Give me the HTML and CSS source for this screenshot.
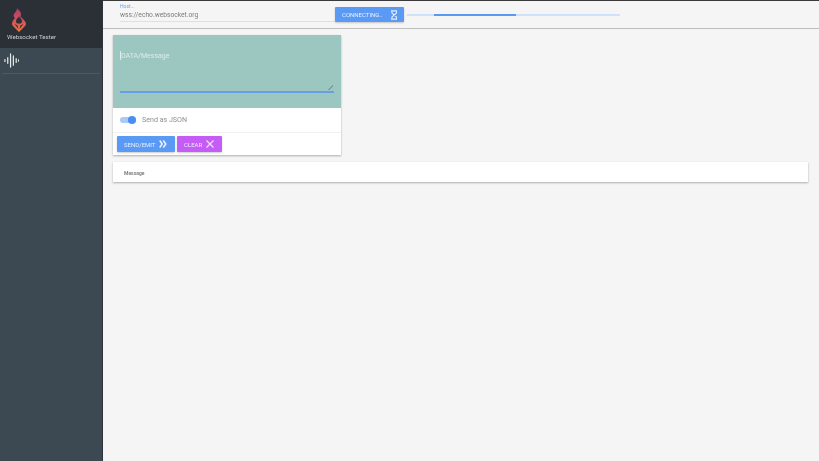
FILE: index.html
```html
<!DOCTYPE html>
<html lang="en">
<head>
    <meta charset="UTF-8">
    <meta name="viewport" content="width=device-width, initial-scale=1.0">
    <title>Websocket Tester</title>
    <link rel="stylesheet" href="styles.css">
</head>
<body>
    <div class="app">
        <aside class="sidebar">
            <div class="brand">
                <svg class="logo" width="14" height="24" viewBox="0 0 14 24">
                    <defs>
                        <linearGradient id="flame" x1="0" y1="0" x2="0" y2="1">
                            <stop offset="0" stop-color="#a83d68"/>
                            <stop offset="0.55" stop-color="#d9525a"/>
                            <stop offset="1" stop-color="#e67a3c"/>
                        </linearGradient>
                    </defs>
                    <path fill="url(#flame)" d="M5 0c1 2 4 3 4 6 0 1 0 2-1 2l2 2c2 2 4 4 4 6 0 1-1 2-2 3l-5 5-5-5c-1-1-2-2-2-3 0-2 1-4 3-6-1-1-2-2-1-4 1-2 3-3 3-6z"/>
                    <path fill="#2a3036" d="M7 8.500c1.500 1.500 3 3 3 4.500 0 1-.5 2-1.200 2.500H5.200C4.500 15 4 14 4 13c0-1.500 1.500-3 3-4.500zM2.500 16l3 1.500 1 3.500zM11.500 16l-3 1.500-1 3.500z"/>
                </svg>
                <div class="brand-name">Websocket Tester</div>
            </div>
            <div class="nav-item">
                <svg width="15" height="15" viewBox="0 0 16 16" stroke="#e6e9ea" stroke-width="1.3" stroke-linecap="round">
                    <path d="M1 7v2M4 5v6M7 1v14M10 3v10M13 6v4M15.500 7.400v1.200"/>
                </svg>
            </div>
            <div class="nav-line"></div>
        </aside>

        <div class="main">
            <header class="toolbar">
                <div class="host-field">
                    <label class="host-label">Host...</label>
                    <div class="host-value">wss://echo.websocket.org</div>
                </div>
                <button class="btn btn-blue connect-btn">
                    CONNECTING..
                    <svg width="7" height="10" viewBox="0 0 7 10" fill="none" stroke="#e4eefd" stroke-width="1.100">
                        <path d="M0 .5h7M0 9.500h7M1 .5v2.300L6 7.200v2.300M6 .5v2.300L1 7.200v2.300"/>
                    </svg>
                </button>
                <div class="progress"><div class="progress-bar"></div></div>
            </header>

            <div class="content">
                <section class="card">
                    <div class="message-area">
                        <textarea class="message-input" placeholder="DATA/Message"></textarea>
                    </div>
                    <div class="json-row">
                        <span class="switch"><span class="switch-thumb"></span></span>
                        <span>Send as JSON</span>
                    </div>
                    <div class="actions">
                        <button class="btn btn-blue send-btn">
                            SEND/EMIT
                            <svg width="8" height="8" viewBox="0 0 8 8" fill="none" stroke="#eef4fe" stroke-width="1.500">
                                <path d="M.7.500l2.500 3.500-2.500 3.500M4.300.500l2.500 3.500-2.500 3.500"/>
                            </svg>
                        </button>
                        <button class="btn btn-purple">
                            CLEAR
                            <svg width="8" height="8" viewBox="0 0 8 8" fill="none" stroke="#f6e6fe" stroke-width="1.100">
                                <path d="M.5.500l7 7M7.500.500l-7 7"/>
                            </svg>
                        </button>
                    </div>
                </section>

                <section class="message-list">Message</section>
            </div>
        </div>
    </div>
</body>
</html>
```

FILE: styles.css
```css
html, body {
    margin: 0;
    height: 100%;
}
body {
    font-family: Roboto, "Liberation Sans", sans-serif;
    background-color: #f5f5f5;
    overflow: hidden;
}
.app {
    display: flex;
    height: 461px;
    will-change: transform;
}
.sidebar {
    width: 102px;
    flex-shrink: 0;
    background-color: #3c4952;
    border-right: 1px solid #2c3339;
}
.brand {
    height: 48px;
    background-color: #2a3036;
    display: flex;
    flex-direction: column;
    align-items: flex-start;
    box-sizing: border-box;
    padding: 8px 0 0 7px;
}
.logo {
    margin-left: 5px;
}
.brand-name {
    color: #c9cccf;
    font-size: 6.200px;
    line-height: 8px;
    margin-top: 1px;
}
.nav-item {
    height: 25px;
    padding-left: 4px;
    display: flex;
    align-items: center;
}
.nav-line {
    height: 1px;
    margin: 0 2px;
    background-color: #8a3d4b;
}
.main {
    flex: 1;
    min-width: 0;
}
.toolbar {
    height: 29px;
    box-sizing: border-box;
    border-top: 1px solid #3a3a3a;
    border-bottom: 1px solid #bdbdbd;
    display: flex;
    align-items: flex-start;
    padding-left: 17px;
}
.host-field {
    width: 215px;
    height: 20px;
    border-bottom: 1px solid #e0e0e0;
    flex-shrink: 0;
}
.host-label {
    display: block;
    color: #6ea6f7;
    font-size: 5px;
    line-height: 5px;
    margin-top: 3px;
}
.host-value {
    color: #7d7d7d;
    font-size: 6.700px;
    line-height: 10px;
    margin-top: 1px;
}
.btn {
    border: none;
    border-radius: 1px;
    color: #e8f0fd;
    font-family: inherit;
    font-size: 6px;
    height: 16px;
    padding: 0 7px;
    display: inline-flex;
    align-items: center;
    gap: 4px;
    box-shadow: 0 1px 2px rgba(0,0,0,0.2);
}
.btn-blue {
    background-color: #5a9af5;
}
.btn-purple {
    background-color: #c45cf5;
    width: 45px;
}
.send-btn {
    width: 58px;
}
.connect-btn {
    width: 69px;
    height: 15px;
    margin: 6px 0 0 0;
    gap: 8px;
    flex-shrink: 0;
}
.progress {
    width: 213px;
    height: 2px;
    margin: 13px 0 0 3px;
    background-color: #cfe1fb;
}
.progress-bar {
    width: 82px;
    height: 2px;
    margin-left: 27px;
    background-color: #5a9af5;
}
.content {
    padding: 6px 11px 0 10px;
}
.card {
    width: 228px;
    background: white;
    box-shadow: 0 1px 2px rgba(0,0,0,0.3);
}
.message-area {
    position: relative;
    height: 73px;
    box-sizing: border-box;
    padding: 0 7px;
    background-color: #9cc7c1;
}
/* text cursor of the focused field */
.message-area::after {
    content: "";
    position: absolute;
    left: 7px;
    top: 16px;
    width: 1px;
    height: 9px;
    background-color: #dcebea;
}
.message-input {
    display: block;
    width: 100%;
    height: 58px;
    box-sizing: border-box;
    margin: 0;
    padding: 17px 0 0 1px;
    background: transparent;
    border: none;
    border-bottom: 2px solid #659fe6;
    border-radius: 0;
    outline: none;
    font-family: inherit;
    font-size: 7px;
    line-height: 8px;
    resize: vertical;
}
.message-input::placeholder {
    color: #dcebea;
    opacity: 1;
}
.message-input::-webkit-resizer {
    background: linear-gradient(135deg, transparent 45%, #7f9c9e 45%, #7f9c9e 65%, transparent 65%) right 1px bottom 1px / 5px 5px no-repeat;
}
.json-row {
    height: 23px;
    padding: 0 0 1px 7px;
    display: flex;
    align-items: center;
    gap: 6px;
    color: #8f8f8f;
    font-size: 7.100px;
    border-bottom: 1px solid #f0f0f0;
}
.switch {
    position: relative;
    width: 16px;
    height: 6px;
    border-radius: 3px;
    background-color: #a9c9f8;
}
.switch-thumb {
    position: absolute;
    right: 0;
    top: -1px;
    width: 8px;
    height: 8px;
    border-radius: 50%;
    background-color: #4a8ef3;
}
.actions {
    padding: 3px 4px;
    height: 16px;
    display: flex;
    gap: 2px;
}
.message-list {
    width: 695px;
    margin-top: 7px;
    height: 20px;
    box-sizing: border-box;
    padding-left: 11px;
    background: white;
    box-shadow: 0 1px 2px rgba(0,0,0,0.3);
    color: #808080;
    font-size: 5px;
    font-weight: bold;
    line-height: 22px;
}
```
